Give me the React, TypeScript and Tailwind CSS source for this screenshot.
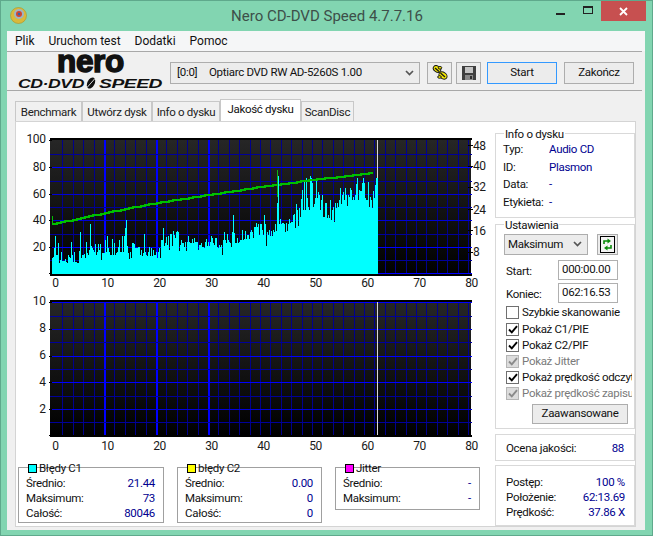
import React from "react";

const A = [175,170,145,108,165,165,130,188,180,155,182,182,182,178,185,188,165,170,175,125,165,185,155,185,185,188,190,153,97,175,165,165,162,175,125,160,165,150,72,137,145,150,155,132,165,155,132,150,132,180,160,160,160,120,155,108,145,155,165,165,117,165,130,165,160,155,140,120,155,155,108,155,108,85,60,137,160,177,155,175,130,130,133,143,143,143,142,142,165,150,168,160,102,155,165,168,155,142,168,145,168,150,165,165,155,175,155,145,175,120,120,85,137];
const B = [130,112,135,108,150,102,102,137,93,105,115,97,93,95,152,135,120,130,130,140,127,152,125,108,125,128,130,117,130,113,125,125,125,150,135,135,130,140,140,143,125,117,138,125,138,125,108,113,130,135,113,113,140,145,135,140,135,165,120,97,120,130,102,120,125,130,140,97,45,100,130,130,113,130,125,120,120,90,120,117,93,117,105,105,117,95,90,95,115,82,82,70,82,72,105,72,72,90,105,45,72,138,95,105,90];
const C = [212,198,212,195,200,178,198,113,33,178,162,178,175,175,178,200,175,198,178,163,175,170,170,150,148,188,118,135,182,128,155,102,75,135,50,135,40,100,125,135,33,40,55,125,118,100,40,100,82,90,135,105,90,155,155,115,115,160,150,160,105,165,135,125,172,115,128,115,125,105,70,118,90,80,105,70,90,122,90,95,70,75,105,95,105,90,58,38,105,75,78,78,55,40,55,100,105,105,52,125,95,105,130,78,100,60,40,40];

const bars: string[] = [];
A.forEach((v, i) => bars.push(`M${52 + i} ${Math.round(200 + v / 3)}V274h1V${Math.round(200 + v / 3)}z`));
B.forEach((v, i) => bars.push(`M${165 + i} ${Math.round(200 + v / 3)}V274h1V${Math.round(200 + v / 3)}z`));
C.forEach((v, i) => bars.push(`M${270 + i} ${Math.round(165 + v / 3)}V274h1V${Math.round(165 + v / 3)}z`));
const barPath = bars.join("");

const greenKnots: [number, number][] = [[53,224],[104,213],[156,203],[208,195],[260,187],[312,180],[375,172.5]];
function greenY(x: number) {
  for (let i = 0; i < greenKnots.length - 1; i++) {
    const [x0, y0] = greenKnots[i];
    const [x1, y1] = greenKnots[i + 1];
    if (x <= x1) return y0 + ((y1 - y0) * (x - x0)) / (x1 - x0);
  }
  return 172.5;
}
let gp = "M52.5 216V224";
for (let x = 53; x <= 371; x += 4) {
  const y = Math.round(greenY(x));
  gp += `L${x} ${y}L${x + 4} ${y}`;
}

const VX = [62.4,72.8,83.2,93.6,114.4,124.8,135.2,145.6,166.4,176.8,187.2,197.6,218.4,228.8,239.2,249.6,260,270.4,280.8,291.2,301.6,312,322.4,332.8,343.2,353.6,364,374.4,384.8,395.2,405.6,416,426.4,436.8,447.2,457.6,468];
const fontLabel = "Roboto";

function Grid({ id, y0, y1, thin, mid, bright }: { id: string; y0: number; y1: number; thin: number[]; mid: number[]; bright: number[] }) {
  return (
    <g shapeRendering="crispEdges">
      <defs>
        <linearGradient id={id} x1="0" y1="0" x2="0" y2="1">
          <stop offset="0" stopColor="#262626" />
          <stop offset="1" stopColor="#000000" />
        </linearGradient>
      </defs>
      <rect x="50" y={y0} width="421" height={y1 - y0} fill={`url(#${id})`} />
      {VX.map((x) => <rect key={x} x={Math.round(x)} y={y0} width="1" height={y1 - y0} fill="#00008c" />)}
      {[104, 156, 208].map((x) => <rect key={x} x={x} y={y0} width="1.6" height={y1 - y0} fill="#0000ff" />)}
      {thin.map((y) => <rect key={y} x="50" y={y} width="422" height="1" fill="#00009a" />)}
      {mid.map((y) => <rect key={y} x="50" y={y} width="422" height="1" fill="#0000d8" />)}
      {bright.map((y) => <rect key={y} x="50" y={y} width="422" height="1" fill="#0000ff" />)}
      <rect x="50" y={y0 - 2} width="422" height="2" fill="#000" />
      <rect x="50" y={y1} width="422" height="1.5" fill="#000" />
    </g>
  );
}

const lab = { fontFamily: fontLabel, fontSize: 12, fill: "#1a1a1a", letterSpacing: "-0.4px" };

function XLabels({ y }: { y: number }) {
  return (
    <g {...lab} textAnchor="middle">
      {[0,10,20,30,40,50,60,70,80].map((v) => <text key={v} x={55.5 + v * 5.2} y={y}>{v}</text>)}
    </g>
  );
}

function TopChart() {
  return (
    <svg width="479" height="170" viewBox="16 122 479 170" className="block">
      <Grid id="g1" y0={140} y1={274} thin={[154,181,207,234,260]} mid={[194,220]} bright={[167,247,273]} />
      <g shapeRendering="crispEdges">
        <rect x="377" y="140" width="1.4" height="40" fill="#d8d8d8" />
        <path d={barPath} fill="#00ffff" />
      </g>
      <path d={gp} fill="none" stroke="#00c000" strokeWidth="1.3" shapeRendering="crispEdges" />
      <path d="M277.5 170V197" stroke="#10b010" strokeWidth="1.2" shapeRendering="crispEdges" />
      <rect x="278" y="176" width="1" height="24" fill="#00ffff" shapeRendering="crispEdges" />
      <g fill="#000" shapeRendering="crispEdges">
        {[140,167,194,220,247,273].map((y) => <rect key={y} x="49" y={y} width="3" height="1" />)}
        {[145,166,187,209,230,252].map((y) => <rect key={y} x="468" y={y} width="5" height="1" />)}
      </g>
      <g {...lab} textAnchor="end">
        {[[100,142.5],[80,170.5],[60,197.5],[40,223.5],[20,250.5]].map(([v, y]) => <text key={v} x="45.5" y={y}>{v}</text>)}
      </g>
      <g {...lab}>
        {[[48,149.5],[40,170],[32,191],[24,213.5],[16,234.5],[8,255.5]].map(([v, y]) => <text key={v} x="473" y={y}>{v}</text>)}
      </g>
      <XLabels y={286.5} />
    </svg>
  );
}

function BottomChart() {
  return (
    <svg width="479" height="170" viewBox="16 292 479 170" className="block">
      <Grid id="g2" y0={302} y1={435} thin={[316,342,369,396,422]} mid={[329,409]} bright={[302,356,382,435]} />
      <rect x="377" y="302" width="1.4" height="133" fill="#d8d8d8" shapeRendering="crispEdges" />
      <g fill="#000" shapeRendering="crispEdges">
        {[302,329,356,382,409,435].map((y) => <rect key={y} x="49" y={y} width="3" height="1" />)}
      </g>
      <g {...lab} textAnchor="end">
        {[[10,305],[8,332],[6,359],[4,386],[2,413]].map(([v, y]) => <text key={v} x="45.5" y={y}>{v}</text>)}
      </g>
      <XLabels y={449.5} />
    </svg>
  );
}

function Logo() {
  return (
    <svg width="146" height="36" viewBox="17 54 146 36" className="block overflow-visible">
      <text x="57" y="72.5" fontFamily="Liberation Sans" fontWeight="700" fontSize="31" textLength="67" lengthAdjust="spacingAndGlyphs" stroke="#111" strokeWidth="1.5" fill="#111">nero</text>
      <text x="18" y="88.5" fontFamily="Liberation Sans" fontWeight="700" fontStyle="italic" fontSize="12.5" textLength="66" lengthAdjust="spacingAndGlyphs" fill="#111">CD·DVD</text>
      <ellipse cx="91" cy="84" rx="3.6" ry="6" transform="rotate(28 91 84)" fill="#111" />
      <path d="M87 88.5L95 79.5" stroke="#eee" strokeWidth="0.9" />
      <text x="99" y="88.5" fontFamily="Liberation Sans" fontWeight="700" fontStyle="italic" fontSize="12.5" textLength="63" lengthAdjust="spacingAndGlyphs" fill="#111">SPEED</text>
    </svg>
  );
}

function KeysIcon() {
  return (
    <svg width="16" height="15" viewBox="0 0 16 15">
      <g stroke="#1a1a1a" strokeWidth="1" fill="#f6ea00">
        <ellipse cx="5" cy="4" rx="4" ry="3" transform="rotate(35 5 4)" />
        <ellipse cx="11" cy="10.5" rx="4.4" ry="3.2" transform="rotate(35 11 10.5)" />
        <ellipse cx="8" cy="2.8" rx="1.8" ry="1.3" />
        <ellipse cx="7.5" cy="12" rx="1.8" ry="1.3" />
      </g>
      <path d="M3 3L7 6.5M8.5 8L13 12" stroke="#1a1a1a" strokeWidth="1.4" />
    </svg>
  );
}

function SaveIcon() {
  return (
    <svg width="14" height="14" viewBox="0 0 14 14">
      <path d="M0 0H14V14H0Z" fill="#3f3f3f" />
      <rect x="3" y="1" width="8" height="6" fill="#c4c4c4" />
      <rect x="3" y="9" width="8" height="5" fill="#8a8a8a" />
      <rect x="8" y="10" width="2" height="3" fill="#2e2e2e" />
    </svg>
  );
}

function RefreshIcon() {
  return (
    <svg width="15" height="17" viewBox="0 0 15 17">
      <rect x="0.5" y="0.5" width="14" height="16" fill="#f4f4f4" stroke="#000" />
      <path d="M4 8V5H8" fill="none" stroke="#0a8a0a" strokeWidth="1.6" />
      <path d="M7.5 2.5L11 5L7.5 7.5Z" fill="#0a8a0a" />
      <path d="M11 9V12H7" fill="none" stroke="#0a8a0a" strokeWidth="1.6" />
      <path d="M7.5 9.5L4 12L7.5 14.5Z" fill="#0a8a0a" />
    </svg>
  );
}

function Chevron() {
  return (
    <svg width="9" height="6" viewBox="0 0 9 6"><path d="M1 1L4.5 4.5L8 1" fill="none" stroke="#555" strokeWidth="1.7" /></svg>
  );
}

function Check({ label, state }: { label: string; state: "on" | "off" | "dis" }) {
  const box = state === "dis" ? "border-[#b5b5b5] bg-[#dcdcdc]" : "border-[#707070] bg-white";
  return (
    <div className={`flex items-center h-[16px] whitespace-nowrap overflow-hidden ${state === "dis" ? "text-[#7a7a7a]" : "text-[#111]"}`}>
      <span className={`w-[13px] h-[13px] border flex items-center justify-center shrink-0 ${box}`}>
        {state !== "off" && (
          <svg width="10" height="9" viewBox="0 0 10 9"><path d="M1 4.5L3.8 7.3L9 1.2" fill="none" stroke={state === "dis" ? "#8a8a8a" : "#000"} strokeWidth="1.9" /></svg>
        )}
      </span>
      <span className="ml-[3px]">{label}</span>
    </div>
  );
}

function Row({ l, v }: { l: string; v: string }) {
  return (
    <div className="flex justify-between h-[15px] leading-[15px]">
      <span className="text-[#111]">{l}</span>
      <span className="text-[#000090]">{v}</span>
    </div>
  );
}

function ErrBox({ title, swatch, rows, w, h }: { title: string; swatch: string; rows: [string, string][]; w: string; h: string }) {
  return (
    <div className={`relative border border-[#a0a0a0] pl-[7px] pr-[8px] pt-[8px] ${w} ${h}`}>
      <div className="absolute left-[9px] top-[-5px] flex items-center h-[11px] leading-[11px] text-[#111]">
        <span className={`w-[9px] h-[9px] border border-black mr-[2px] ${swatch}`} />
        <span>{title}</span>
      </div>
      {rows.map(([l, v]) => <Row key={l} l={l} v={v} />)}
    </div>
  );
}

function Tab({ label, w, active }: { label: string; w: string; active?: boolean }) {
  return active ? (
    <div className={`h-[22px] -mt-[1px] ${w} bg-white border border-b-0 border-[#c8c8c8] text-center leading-[19px] text-[#111] relative z-10`}>{label}</div>
  ) : (
    <div className={`h-[20px] ${w} bg-[#f0f0f0] border border-b-0 border-[#c8c8c8] text-center leading-[20px] text-[#222]`}>{label}</div>
  );
}

export default function App() {
  return (
    <div className="w-[653px] h-[536px] bg-[#82d5b1] border border-[#5fa98c] flex flex-col overflow-hidden text-[11.5px] tracking-[-0.3px] text-[#111]" style={{ fontFamily: 'Roboto, sans-serif' }}>
      {/* title bar */}
      <div className="h-[30px] flex items-start shrink-0">
        <svg width="17" height="17" viewBox="0 0 17 17" className="ml-[9px] mt-[6px] shrink-0">
          <circle cx="8.5" cy="8.5" r="8" fill="#d9b93c" />
          <circle cx="8.5" cy="8.5" r="8" fill="none" stroke="#a8922c" strokeWidth="0.6" />
          <circle cx="9" cy="7" r="5" fill="#9eb3c4" />
          <circle cx="9" cy="7" r="3" fill="#d2452f" />
          <circle cx="9" cy="7" r="1.2" fill="#2e64b0" />
        </svg>
        <div className="flex-1 text-center text-[15px] tracking-normal leading-[30px] text-[#3d4f49] pl-[80px]">Nero CD-DVD Speed 4.7.7.16</div>
        <div className="flex shrink-0 mr-[6px]">
          <div className="w-[27px] h-[21px] flex items-center justify-center"><span className="block w-[9px] h-[2px] bg-[#222] mt-[5px]" /></div>
          <div className="w-[27px] h-[21px] flex items-center justify-center"><span className="block w-[10px] h-[8px] border border-[#222] border-t-2 -mt-[3px]" /></div>
          <div className="w-[45px] h-[20px] bg-[#c75050] flex items-center justify-center">
            <svg width="9" height="9" viewBox="0 0 9 9"><path d="M1 1L8 8M8 1L1 8" stroke="#fff" strokeWidth="1.8" /></svg>
          </div>
        </div>
      </div>
      {/* client */}
      <div className="ml-[6px] w-[638px] h-[499px] bg-[#f0f0f0] flex flex-col shrink-0">
        <div className="h-[20px] bg-[#f5f6f7] flex items-center pl-[8px] gap-[14px] text-[12px] tracking-normal text-[#111]">
          <span>Plik</span><span>Uruchom test</span><span>Dodatki</span><span>Pomoc</span>
        </div>
        <div className="h-px bg-[#a8a8a8] mr-[3px]" />
        <div className="h-[38px] flex items-center">
          <div className="ml-[10px] w-[153px] shrink-0"><Logo /></div>
          <div className="w-[250px] h-[22px] border border-[#adadad] bg-[#ececec] flex items-center pl-[6px] pr-[5px] text-[#111] mt-[3px] whitespace-nowrap">
            <span className="w-[32px]">[0:0]</span>
            <span className="flex-1">Optiarc DVD RW AD-5260S 1.00</span>
            <Chevron />
          </div>
          <div className="w-[25px] h-[22px] ml-[7px] mt-[3px] border border-[#adadad] bg-[#ececec] flex items-center justify-center"><KeysIcon /></div>
          <div className="w-[25px] h-[22px] ml-[4px] mt-[3px] border border-[#adadad] bg-[#ececec] flex items-center justify-center"><SaveIcon /></div>
          <div className="w-[70px] h-[22px] ml-[6px] mt-[3px] border border-[#3399ff] bg-[#ececec] flex items-center justify-center">Start</div>
          <div className="w-[70px] h-[22px] ml-[7px] mt-[3px] border border-[#adadad] bg-[#ececec] flex items-center justify-center">Zakończ</div>
        </div>
        <div className="h-px bg-[#a8a8a8] mr-[3px]" />
        {/* tabs */}
        <div className="mt-[10px] ml-[8px] h-[20px] flex items-end">
          <Tab label="Benchmark" w="w-[67px]" />
          <Tab label="Utwórz dysk" w="w-[70px]" />
          <Tab label="Info o dysku" w="w-[68px]" />
          <Tab label="Jakość dysku" w="w-[81px]" active />
          <Tab label="ScanDisc" w="w-[53px]" />
        </div>
        {/* panel */}
        <div className="ml-[8px] w-[621px] h-[406px] bg-white border border-[#d4d4d4] flex">
          <div className="w-[479px] shrink-0 flex flex-col">
            <TopChart />
            <BottomChart />
            <div className="mt-[5px] ml-[2px] flex items-start gap-[13px]">
              <ErrBox title="Błędy C1" swatch="bg-[#00ffff]" w="w-[146px]" h="h-[56px]" rows={[["Średnio:", "21.44"], ["Maksimum:", "73"], ["Całość:", "80046"]]} />
              <ErrBox title="błędy C2" swatch="bg-[#ffff00]" w="w-[145px]" h="h-[56px]" rows={[["Średnio:", "0.00"], ["Maksimum:", "0"], ["Całość:", "0"]]} />
              <ErrBox title="Jitter" swatch="bg-[#ff00ff]" w="w-[145px]" h="h-[43px]" rows={[["Średnio:", "-"], ["Maksimum:", "-"]]} />
            </div>
          </div>
          <div className="w-[140px] shrink-0 pt-[11px] flex flex-col">
            <div className="relative h-[85px] border border-[#d9d9d9] pl-[7px] pt-[7px]">
              <span className="absolute left-[8px] top-[-6px] bg-white px-px leading-[13px] text-[#111]">Info o dysku</span>
              {[["Typ:", "Audio CD"], ["ID:", "Plasmon"], ["Data:", "-"], ["Etykieta:", "-"]].map(([l, v]) => (
                <div key={l} className="flex h-[17.6px] leading-[17.6px]">
                  <span className="w-[46px] text-[#111]">{l}</span>
                  <span className="text-[#000090]">{v}</span>
                </div>
              ))}
            </div>
            <div className="relative mt-[6px] h-[206px] border border-[#d9d9d9] pl-[8px] pt-[9px]">
              <span className="absolute left-[8px] top-[-6px] bg-white px-px leading-[13px] text-[#111]">Ustawienia</span>
              <div className="flex items-center">
                <div className="w-[84px] h-[21px] border border-[#adadad] bg-[#ececec] flex items-center justify-between pl-[3px] pr-[5px]"><span>Maksimum</span><Chevron /></div>
                <div className="w-[21px] h-[21px] ml-[9px] border border-[#adadad] bg-[#ececec] flex items-center justify-center"><RefreshIcon /></div>
              </div>
              <div className="flex items-center mt-[5px] h-[20px]">
                <span className="w-[54px] pl-[2px] pt-[3px]">Start:</span>
                <span className="w-[60px] h-[20px] border border-[#b0b0b0] pl-[3px] leading-[17px] text-[#111]">000:00.00</span>
              </div>
              <div className="flex items-center mt-[3px] h-[20px]">
                <span className="w-[54px] pl-[2px] pt-[3px]">Koniec:</span>
                <span className="w-[60px] h-[20px] border border-[#b0b0b0] pl-[3px] leading-[17px] text-[#111]">062:16.53</span>
              </div>
              <div className="pl-[2px] mt-[2px] w-[130px]">
                <Check label="Szybkie skanowanie" state="off" />
              </div>
              <div className="pl-[2px] w-[128px] mt-[1px] flex flex-col">
                <Check label="Pokaż C1/PIE" state="on" />
                <Check label="Pokaż C2/PIF" state="on" />
                <Check label="Pokaż Jitter" state="dis" />
                <Check label="Pokaż prędkość odczytu" state="on" />
                <Check label="Pokaż prędkość zapisu" state="dis" />
              </div>
              <div className="ml-[28px] mt-[2px] w-[96px] h-[20px] border border-[#adadad] bg-[#ececec] flex items-center justify-center">Zaawansowane</div>
            </div>
            <div className="mt-[5px] h-[27px] border border-[#d9d9d9] pl-[10px] pr-[10px] pt-[6px]">
              <Row l="Ocena jakości:" v="88" />
            </div>
            <div className="mt-[4px] h-[61px] border border-[#d9d9d9] pl-[10px] pr-[9px] pt-[9px]">
              <Row l="Postęp:" v="100 %" />
              <Row l="Położenie:" v="62:13.69" />
              <Row l="Prędkość:" v="37.86 X" />
            </div>
          </div>
        </div>
      </div>
    </div>
  );
}
